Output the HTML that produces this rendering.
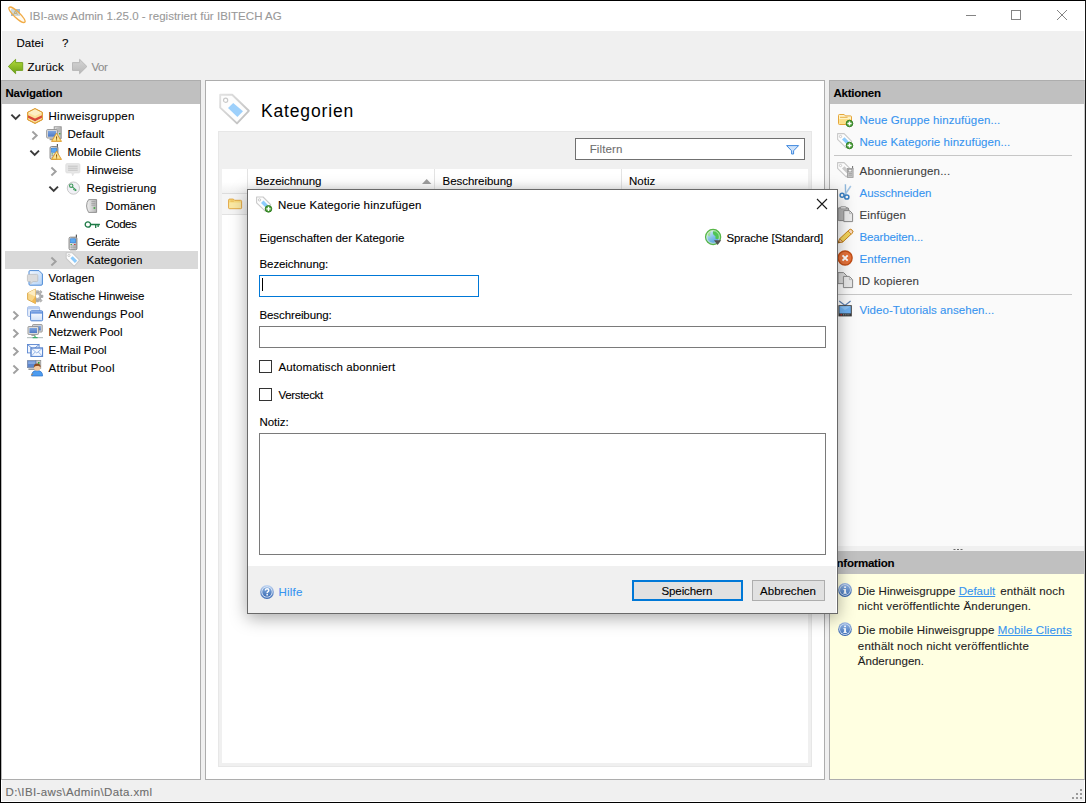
<!DOCTYPE html>
<html lang="de">
<head>
<meta charset="utf-8">
<title>IBI-aws Admin 1.25.0 - registriert für IBITECH AG</title>
<style>
html,body{margin:0;padding:0;}
body{width:1086px;height:803px;position:relative;overflow:hidden;background:#f0f0f0;font-family:"Liberation Sans",sans-serif;font-size:12px;}
.a{position:absolute;box-sizing:border-box;}
.t{position:absolute;white-space:pre;-webkit-text-stroke:.1px currentColor;}
svg{position:absolute;overflow:visible;}
</style>
</head>
<body>
<!-- window frame -->
<div class="a" style="left:0;top:0;width:1086px;height:803px;border:1px solid #000;border-right-color:#161616"></div>
<div class="a" style="left:1px;top:31px;width:1084px;height:771px;border:1px solid #fff;border-top:0"></div>
<!-- title bar -->
<div class="a" style="left:1px;top:1px;width:1084px;height:30px;background:#fff"></div>
<!-- navigation panel -->
<div class="a" style="left:1px;top:80px;width:200px;height:700px;background:#fff;border:1px solid #adadad;border-left-color:#b9b9b9"></div>
<div class="a" style="left:2px;top:81px;width:198px;height:23px;background:#c0c0c0"></div>
<div class="a" style="left:5px;top:251px;width:193px;height:18px;background:#d9d9d9"></div>
<!-- center panel -->
<div class="a" style="left:205px;top:80px;width:620px;height:700px;background:#fff;border:1px solid #adadad"></div>
<div class="a" style="left:218px;top:131px;width:594px;height:636px;background:#f0f0f0;border:1px solid #e7e7e7"></div>
<div class="a" style="left:575px;top:138px;width:230px;height:22px;background:#fff;border:1px solid #707070"></div>
<div class="a" style="left:222px;top:169px;width:586px;height:594px;background:#fff"></div>
<div class="a" style="left:222px;top:169px;width:586px;height:25px;background:linear-gradient(#fff 55%,#f1f1f1);border-bottom:1px solid #dcdcdc"></div>
<div class="a" style="left:247px;top:169px;width:1px;height:24px;background:#e3e3e3"></div>
<div class="a" style="left:434px;top:169px;width:1px;height:24px;background:#e3e3e3"></div>
<div class="a" style="left:621px;top:169px;width:1px;height:24px;background:#e3e3e3"></div>
<div class="a" style="left:222px;top:194px;width:586px;height:21px;background:#f5f5f5;border-bottom:1px solid #e2e2e2"></div>
<!-- right panel -->
<div class="a" style="left:829px;top:80px;width:256px;height:700px;background:#fafafa;border:1px solid #adadad;border-right-color:#c8c8c8"></div>
<div class="a" style="left:830px;top:81px;width:254px;height:23px;background:#c0c0c0"></div>
<div class="a" style="left:834px;top:155px;width:238px;height:1px;background:#c6c6c6"></div>
<div class="a" style="left:834px;top:294px;width:238px;height:1px;background:#c6c6c6"></div>
<div class="a" style="left:830px;top:546px;width:254px;height:5px;background:#f0f0f0"></div>
<div class="a" style="left:830px;top:551px;width:254px;height:23px;background:#c0c0c0"></div>
<div class="a" style="left:830px;top:574px;width:254px;height:205px;background:#ffffe1"></div>
<svg width="1086" height="803" viewBox="0 0 1086 803" style="left:0;top:0">
<defs>
<linearGradient id="gGreen" x1="0" y1="0" x2="0" y2="1"><stop offset="0" stop-color="#b5dc3c"/><stop offset="1" stop-color="#6a9f16"/></linearGradient>
<linearGradient id="gGray" x1="0" y1="0" x2="0" y2="1"><stop offset="0" stop-color="#d4d4d4"/><stop offset="1" stop-color="#b9b9b9"/></linearGradient>
<linearGradient id="gScreen" x1="0" y1="0" x2="0" y2="1"><stop offset="0" stop-color="#7fa6e0"/><stop offset="1" stop-color="#4b78c4"/></linearGradient>
<linearGradient id="gTower" x1="0" y1="0" x2="1" y2="0"><stop offset="0" stop-color="#f2f2f2"/><stop offset="1" stop-color="#b4b4b4"/></linearGradient>
<linearGradient id="gDoc" x1="0" y1="0" x2="1" y2="1"><stop offset="0" stop-color="#f4f9ff"/><stop offset="1" stop-color="#b4d2f6"/></linearGradient>
<linearGradient id="gWarn" x1="0" y1="0" x2="0" y2="1"><stop offset="0" stop-color="#fff0a8"/><stop offset="1" stop-color="#f6c648"/></linearGradient>
<linearGradient id="gWin" x1="0" y1="0" x2="0" y2="1"><stop offset="0" stop-color="#fff"/><stop offset="1" stop-color="#cfe0f7"/></linearGradient>
<linearGradient id="gInfoO" x1="0" y1="0" x2="0" y2="1"><stop offset="0" stop-color="#9db9e4"/><stop offset="1" stop-color="#2f5ea8"/></linearGradient><linearGradient id="gInfoI" x1="0" y1="0" x2="0" y2="1"><stop offset="0" stop-color="#8fb2e2"/><stop offset="1" stop-color="#4474ba"/></linearGradient><radialGradient id="gInfo" cx=".4" cy=".3" r=".8"><stop offset="0" stop-color="#a9c4ec"/><stop offset="1" stop-color="#4a78bc"/></radialGradient>
<g id="chevD"><path d="M0 0 L4.3 4.4 L8.6 0" fill="none" stroke="#3a3a3a" stroke-width="1.9"/></g>
<g id="chevR"><path d="M0 0 L4.3 4 L0 8" fill="none" stroke="#a0a0a0" stroke-width="1.9"/></g>
<g id="warn"><path d="M5.5 .8 L10.5 9 L.5 9 Z" fill="url(#gWarn)" stroke="#dc9a2c" stroke-width=".9" stroke-linejoin="round"/><path d="M5.5 2.4 L9 8.2 L2 8.2 Z" fill="#fff3c0" opacity=".55"/><rect x="5" y="4" width="1.1" height="2.4" fill="#8a5a10"/><rect x="5" y="7" width="1.1" height="1" fill="#8a5a10"/></g>
<g id="tag16"><path d="M.6 .6 L7.1 .6 L14.7 8.3 L9.2 14.8 L.6 6.4 Z" fill="#fdfdfd" stroke="#c9c9c9" stroke-width="1.1" stroke-linejoin="round"/><path d="M7.5 4.2 L12.2 8.9 L9.8 11.3 L5 6.5 Z" fill="#8ccbfc"/><circle cx="3.5" cy="3.5" r="1.15" fill="#fff" stroke="#bcbcbc" stroke-width=".8"/></g>
<g id="phone"><rect x="7.3" y="0" width="1.2" height="4" fill="#5a5a5a"/><rect x=".6" y="2.6" width="7.8" height="12.6" rx="1.3" fill="url(#gTower)" stroke="#7d7d7d" stroke-width="1"/><rect x="2" y="4.2" width="5" height="4" fill="#59a9f4" stroke="#2f7ad0" stroke-width=".6"/><rect x="2" y="9.4" width="1.4" height="1" fill="#3aa23a"/><rect x="5.6" y="9.4" width="1.4" height="1" fill="#d03030"/><path d="M2 11.4h1.3M3.9 11.4h1.3M5.8 11.4h1.3M2 13.2h1.3M3.9 13.2h1.3M5.8 13.2h1.3" stroke="#8a8a8a" stroke-width="1"/></g>
<g id="info"><circle cx="7" cy="7" r="6.9" fill="url(#gInfoO)"/><circle cx="7" cy="7" r="5.7" fill="#dbe7f8"/><circle cx="7" cy="7" r="5" fill="url(#gInfoI)"/><rect x="6.2" y="6" width="1.7" height="4.4" fill="#fff"/><rect x="6.2" y="3.4" width="1.7" height="1.6" fill="#fff"/><rect x="5.4" y="6" width="1.2" height=".9" fill="#fff"/><rect x="5.3" y="9.7" width="3.5" height=".9" fill="#fff"/></g>
<g id="plus"><circle cx="3.6" cy="3.6" r="3.3" fill="#4c9e3a" stroke="#2c7a1e" stroke-width=".9"/><path d="M3.6 1.5v4.2M1.5 3.6h4.2" stroke="#fff" stroke-width="1.4"/></g>
</defs>
<!-- title icon -->
<g>
<rect x="11" y="9" width="9" height="7" fill="#9fbcd6"/>
<path d="M13.6 14.8 L15.4 10.6 L17.4 14.8 M14.3 13.4 H16.6" fill="none" stroke="#7a6414" stroke-width="1"/>
<ellipse cx="17" cy="14.8" rx="10.8" ry="2.9" transform="rotate(43 17 14.8)" fill="rgba(255,246,225,.5)" stroke="#f1ab45" stroke-width="1.3"/>
</g>
<!-- window controls -->
<path d="M966 15.5h10" stroke="#848484" stroke-width="1"/>
<rect x="1011.5" y="10.5" width="9" height="9" fill="none" stroke="#848484" stroke-width="1"/>
<path d="M1057 10 l10 10 M1067 10 l-10 10" stroke="#848484" stroke-width="1"/>
<!-- toolbar arrows -->
<path d="M8.3 66.5 L15.6 59.3 L15.6 62.6 L22.7 62.6 L22.7 70.4 L15.6 70.4 L15.6 73.7 Z" fill="url(#gGreen)" stroke="#6e9f1c" stroke-width=".9" stroke-linejoin="round"/>
<path d="M86.9 66.5 L79.6 59.3 L79.6 62.6 L72.5 62.6 L72.5 70.4 L79.6 70.4 L79.6 73.7 Z" fill="url(#gGray)" stroke="#b4b4b4" stroke-width=".9" stroke-linejoin="round"/>
<!-- tree chevrons -->
<use href="#chevD" x="11.4" y="114.6"/>
<use href="#chevR" x="32.4" y="131.5"/>
<use href="#chevD" x="30.4" y="150.6"/>
<use href="#chevR" x="51.4" y="167.5"/>
<use href="#chevD" x="49.4" y="186.6"/>
<use href="#chevR" x="51.4" y="257.5"/>
<use href="#chevR" x="13.4" y="311.5"/>
<use href="#chevR" x="13.4" y="329.5"/>
<use href="#chevR" x="13.4" y="347.5"/>
<use href="#chevR" x="13.4" y="365.5"/>
<!-- Hinweisgruppen cube -->
<g transform="translate(27,108)">
<path d="M8 .6 L15.4 4.4 L15.4 11.6 L8 15.4 L.6 11.6 L.6 4.4 Z" fill="#fbe29a" stroke="#dfa03a" stroke-width="1" stroke-linejoin="round"/>
<path d="M8 .9 L15 4.5 L8 8 L1 4.5 Z" fill="#fdf0c4"/>
<path d="M1 7.2 L8 10.6 L15 7.2 L15 9.8 L8 13.2 L1 9.8 Z" fill="#d84a3a"/>
<path d="M8 .6 L15.4 4.4 L15.4 11.6 L8 15.4 L.6 11.6 L.6 4.4 Z" fill="none" stroke="#dfa03a" stroke-width="1" stroke-linejoin="round"/>
</g>
<!-- Default: monitor + tower + warning -->
<g transform="translate(46,126)">
<rect x="8.2" y=".8" width="7" height="11.6" fill="url(#gTower)" stroke="#8e8e8e" stroke-width=".9"/>
<path d="M9.6 3h4.2M9.6 5h4.2" stroke="#9a9a9a" stroke-width=".8"/>
<rect x="13" y="7" width="1.4" height="1.4" fill="#3caa3c"/>
<rect x=".7" y="3.6" width="10.6" height="8.4" rx=".8" fill="#e4e4e4" stroke="#8a8a8a" stroke-width=".9"/>
<rect x="2" y="4.9" width="8" height="5.8" fill="url(#gScreen)"/>
<rect x="3.6" y="12.6" width="5" height="1.6" fill="#9c9c9c"/>
<use href="#warn" x="5" y="6.4"/>
</g>
<!-- Mobile Clients: phone + warning -->
<use href="#phone" x="49.5" y="144"/>
<use href="#warn" x="51" y="150.4"/>
<!-- Hinweise bubble -->
<g transform="translate(65.5,163)">
<path d="M1.5 .5 H13 Q14.5 .5 14.5 2 V8.6 Q14.5 10 13 10 H8.6 L7.2 12.8 L6.2 10 H1.5 Q.2 10 .2 8.6 V2 Q.2 .5 1.5 .5Z" fill="#e6e6e6" stroke="#dcdcdc" stroke-width=".6"/>
<path d="M2.6 3.2h9.6M2.6 5.2h9.6M2.6 7.2h9.6" stroke="#bdbdbd" stroke-width=".9"/>
</g>
<!-- Registrierung: circle with key -->
<g transform="translate(66.8,181.5)">
<circle cx="6.6" cy="6.6" r="6.1" fill="#f1f1f6" stroke="#c9c9c9" stroke-width="1"/>
<circle cx="4.4" cy="4.2" r="1.7" fill="none" stroke="#3f9a5c" stroke-width="1.1"/>
<path d="M5.6 5.4 L9.6 9 M7.6 7.2 L6.6 8.4 M8.8 8.3 L7.9 9.4" stroke="#3f9a5c" stroke-width="1.1"/>
</g>
<!-- Domaenen: server -->
<g transform="translate(86,199)">
<path d="M2.6 .6 H10.6 V13.4 H2.6 Q.6 10 .6 7 Q.6 3 2.6 .6Z" fill="url(#gTower)" stroke="#8a8a8a" stroke-width=".9"/>
<path d="M5.4 2.6h4M5.4 4.4h4M5.4 6.2h4" stroke="#9b9b9b" stroke-width=".8"/>
<rect x="7.6" y="8.2" width="1.6" height="1.6" fill="#36a336"/>
</g>
<!-- Codes: key -->
<g transform="translate(84.5,221)" fill="none" stroke="#1d7a46" stroke-width="1.3">
<ellipse cx="3.4" cy="3.5" rx="2.7" ry="2.7"/>
<path d="M6.2 3.5 H15.4 M11.2 3.6 V7 M13.6 3.6 V6"/>
</g>
<!-- Geraete phone -->
<use href="#phone" x="68.5" y="234.6"/>
<!-- Kategorien tag -->
<use href="#tag16" x="65.6" y="252.2" transform="translate(65.6 252.2) scale(.95) translate(-65.6 -252.2)"/>
<!-- Vorlagen -->
<g transform="translate(27,270)">
<path d="M3 .6 H12 L15.4 4 V14 Q15.4 15.2 14.2 15.2 H3 Q2 15.2 2 14 V1.8 Q2 .6 3 .6Z" fill="url(#gDoc)" stroke="#4d8ad6" stroke-width="1"/>
<path d="M1.6 4.4 H9.6 Q10.8 4.4 10.8 5.6 V10.4 Q10.8 11.6 9.6 11.6 H6 L3.6 13.8 V11.6 H1.6 Q.4 11.6 .4 10.4 V5.6 Q.4 4.4 1.6 4.4Z" fill="#dcdcdc" stroke="#b9b9b9" stroke-width=".7"/>
</g>
<!-- Statische Hinweise -->
<g transform="translate(27,288.5)">
<g transform="translate(10.4,7.8)" fill="#b8b8b8" stroke="#8f8f8f" stroke-width=".5">
<path d="M-1.1 -5.6h2.2v2h-2.2z M-1.1 3.6h2.2v2h-2.2z M3.6 -1.1h2v2.2h-2z M1.7 -4.6l1.6-1.2 1.4 1.5-1.3 1.5z M1.7 4.6l1.6 1.2 1.4-1.5-1.3-1.5z"/>
<circle r="3.9"/>
</g>
<circle cx="10.4" cy="7.8" r="1.7" fill="#fff"/>
<path d="M8.4 .6 L8.4 15 L.6 11 L.6 4.6 Z" fill="#f8d68a" stroke="#d9a440" stroke-width=".9" stroke-linejoin="round"/>
<path d="M8.4 .6 L8.4 8 L.6 4.6 Z" fill="#fdecc0"/>
<path d="M8.4 8 L8.4 15 L4.6 13 Z" fill="#f3b850"/>
</g>
<!-- Anwendungs Pool -->
<g transform="translate(27,306)">
<rect x=".6" y=".8" width="12" height="9.6" rx="1" fill="#e6eefb" stroke="#9db8e6" stroke-width="1"/>
<rect x=".6" y=".8" width="12" height="2.4" rx="1" fill="#b9cdf0"/>
<rect x="3.6" y="4.8" width="12" height="10" rx="1" fill="url(#gWin)" stroke="#4a7fd0" stroke-width="1"/>
<rect x="4.1" y="5.3" width="11" height="2.4" fill="#6f9be0"/>
</g>
<!-- Netzwerk Pool -->
<g transform="translate(27,324)">
<rect x="5.6" y=".6" width="9.6" height="7.4" rx=".6" fill="#dedede" stroke="#8c8c8c" stroke-width=".9"/>
<rect x="7" y="1.9" width="6.8" height="4.6" fill="url(#gScreen)"/>
<rect x="1" y="2.6" width="10.4" height="7.8" rx=".6" fill="#e6e6e6" stroke="#8c8c8c" stroke-width=".9"/>
<rect x="2.4" y="4" width="7.6" height="5" fill="url(#gScreen)"/>
<rect x="4.4" y="10.8" width="3.6" height="1.1" fill="#9a9a9a"/>
<rect x="0" y="13" width="16" height="1.2" fill="#b9c4c4"/>
<path d="M8 11.6 V13 M5.6 13.6 H10.6" stroke="#3fae6a" stroke-width="1.3"/>
</g>
<!-- E-Mail Pool -->
<g transform="translate(27,344)" stroke="#5a86cf" stroke-width=".9">
<rect x=".5" y=".5" width="11.6" height="8.4" fill="#f2f7ff"/>
<path d="M.5 .5 L6.3 5.4 L12.1 .5" fill="none"/>
<rect x="4" y="4" width="11.6" height="8.4" fill="#f2f7ff"/>
<path d="M4 4 L9.8 9 L15.6 4 M4 12.4 L8.2 8 M15.6 12.4 L11.4 8" fill="none" stroke="#8fb0e4"/>
<rect x="4" y="4" width="11.6" height="8.4" fill="none"/>
</g>
<!-- Attribut Pool -->
<g transform="translate(27,360)">
<rect x="8.4" y=".4" width="5.4" height="8" fill="#c9c9c9" stroke="#8a8a8a" stroke-width=".7"/>
<rect x="11" y="2" width="1.5" height="1.8" fill="#36a336"/>
<rect x=".4" y=".6" width="8.6" height="7" fill="#5d86cc" stroke="#7a8aa8" stroke-width=".8"/>
<rect x="1.2" y="1.4" width="7" height="2.6" fill="#86a8e0"/>
<rect x="1.4" y="8.4" width="6.6" height="1.6" fill="#9a9a9a"/>
<path d="M4.6 16 Q4.6 10.6 10 10.6 Q15.6 10.6 15.6 16 Z" fill="#4d9cf0" stroke="#2c72c8" stroke-width=".7"/>
<circle cx="10.2" cy="7.6" r="3.2" fill="#f4c9a0"/>
<path d="M6.8 7.4 Q6.6 3.4 10.2 3.4 Q13.8 3.4 13.6 7.4 Q12 5.4 10.2 6 Q8.2 5.6 6.8 7.4Z" fill="#8c4a1e"/>
<path d="M4.4 15.2 l1.2 -1.6" stroke="#e08020" stroke-width="1"/>
</g>
<!-- big tag icon -->
<g transform="translate(219,93.6)">
<defs><linearGradient id="gTagS" x1="0" y1="0" x2="1" y2="1"><stop offset="0" stop-color="#e2e2e2"/><stop offset="1" stop-color="#bdbdbd"/></linearGradient></defs>
<path d="M1.2 1.2 L13.2 1.2 L29.8 17.2 L18 29.8 L1.2 14 Z" fill="#fdfdfd" stroke="url(#gTagS)" stroke-width="1.9" stroke-linejoin="round"/>
<path d="M14.2 9.4 L24 17.6 L18.4 23.4 L9 14.4 Z" fill="#9dd0fb"/>
<circle cx="6.6" cy="6.6" r="2.1" fill="#fff" stroke="#c9c9c9" stroke-width="1.2"/>
</g>
<!-- filter funnel -->
<path d="M786.6 145.6 H798.6 L793.6 150.8 V154 H791.6 V150.8 Z" fill="#cfe3fa" stroke="#3f88de" stroke-width="1" stroke-linejoin="round"/>
<!-- sort arrow -->
<path d="M422 184 L426.7 179 L431.4 184 Z" fill="#9e9e9e"/>
<!-- folder in row -->
<g transform="translate(228,198.5)">
<path d="M.6 1.6 Q.6 .6 1.6 .6 H5.4 L6.6 1.8 H12.6 Q13.6 1.8 13.6 2.8 V9.4 Q13.6 10.2 12.6 10.2 H1.6 Q.6 10.2 .6 9.4Z" fill="#f8dc7c" stroke="#e0a03a" stroke-width=".9"/>
<path d="M1.2 4 H13 V9.6 H1.2Z" fill="#fbe9a4"/>
<path d="M2.4 2.6 h3.4" stroke="#e6b14e" stroke-width=".9"/>
</g>
<!-- actions icons -->
<g transform="translate(838,114)">
<path d="M.5 1.4 Q.5 .5 1.4 .5 H6.2 L7.4 1.9 H12.6 Q13.5 1.9 13.5 2.8 V9.6 Q13.5 10.5 12.6 10.5 H1.4 Q.5 10.5 .5 9.6Z" fill="#fdf3c8" stroke="#e6a63a" stroke-width="1"/>
<path d="M1.2 5 H12.8 V9.9 H1.2Z" fill="#fbe08a"/>
<path d="M2 3.3 h7.6" stroke="#e8b04a" stroke-width="1"/>
<use href="#plus" x="7.9" y="5.9"/>
</g>
<g transform="translate(837,133)"><use href="#tag16" x="0" y="0"/><use href="#plus" x="8.9" y="8.9"/></g>
<g transform="translate(837,162)">
<path d="M.6 .6 L7.1 .6 L14.7 8.3 L9.2 14.8 L.6 6.4 Z" fill="#fbfbfb" stroke="#c6c6c6" stroke-width="1.1" stroke-linejoin="round"/>
<path d="M7.5 4.2 L12.2 8.9 L9.8 11.3 L5 6.5 Z" fill="#c9c9c9"/>
<circle cx="3.5" cy="3.5" r="1.15" fill="#fff" stroke="#bcbcbc" stroke-width=".8"/>
<rect x="15" y="4" width="1.1" height="4" fill="#7a7a7a"/>
<rect x="10.5" y="6.4" width="5.6" height="9" fill="#c4c4c4" stroke="#9a9a9a" stroke-width=".8"/>
<rect x="11.6" y="7.6" width="3.2" height="2.2" fill="#f2f2f2" stroke="#8f8f8f" stroke-width=".5"/>
<path d="M11.6 11.4h3.4M11.6 13.2h3.4" stroke="#a2a2a2" stroke-width=".9"/>
</g>
<g fill="none">
<path d="M845.4 184.2 L845.6 196" stroke="#8fb8dc" stroke-width="1.4"/>
<path d="M850.8 186 L845 194.6" stroke="#a4c6e4" stroke-width="1.6"/>
<circle cx="842.1" cy="195.2" r="2" stroke="#3a80c4" stroke-width="1.5"/>
<circle cx="846.8" cy="197" r="2.1" stroke="#3a80c4" stroke-width="1.5"/>
</g>
<g transform="translate(837,206)">
<rect x="1" y="1.8" width="10.6" height="12.8" rx="1.2" fill="#b4b4b4" stroke="#848484" stroke-width="1"/>
<rect x="3.6" y=".5" width="5.4" height="2.4" rx=".6" fill="#dcdcdc" stroke="#8a8a8a" stroke-width=".6"/>
<path d="M6.8 4.6 H12.6 L15.6 7.6 V15.6 H6.8Z" fill="#ececec" stroke="#8a8a8a" stroke-width="1" stroke-linejoin="round"/>
<path d="M12.6 4.6 V7.6 H15.6" fill="none" stroke="#a8a8a8" stroke-width=".7"/>
</g>
<g>
<path d="M838.3 242.8 L839.6 238.8 L849 230 Q850.6 228.6 852.2 230.2 Q853.6 231.8 852.2 233.2 L843 241.8 Z" fill="#f2d45c" stroke="#c8841c" stroke-width="1" stroke-linejoin="round"/>
<path d="M848 231 L851.2 234.2 L852.2 233.2 Q853.6 231.8 852.2 230.2 Q850.6 228.6 849 230Z" fill="#f6d8c0" stroke="#c8841c" stroke-width=".8"/>
<path d="M838.3 242.8 L839.6 238.8 L843 241.8Z" fill="#f4c8a0" stroke="#b87418" stroke-width=".8"/>
<path d="M838.3 242.8 L838.8 241.2 L840 242.3Z" fill="#503010"/>
</g>
<g>
<circle cx="845.1" cy="258" r="7" fill="#e6723a" stroke="#c24e16" stroke-width="1.4"/>
<path d="M842.5 255.4 L847.7 260.6 M847.7 255.4 L842.5 260.6" stroke="#fff" stroke-width="2"/>
</g>
<g transform="translate(837,272)">
<path d="M1 .6 H6.6 L9.8 3.8 V11.6 H1Z" fill="#dadada" stroke="#8a8a8a" stroke-width="1" stroke-linejoin="round"/>
<path d="M6.4 4.4 H12.4 L15.6 7.6 V15.6 H6.4Z" fill="#e8e8e8" stroke="#8a8a8a" stroke-width="1" stroke-linejoin="round"/>
<path d="M12.4 4.4 V7.6 H15.6" fill="none" stroke="#a8a8a8" stroke-width=".7"/>
</g>
<g>
<path d="M839.2 301 L845 305.4 L850.6 301" fill="none" stroke="#5a7eae" stroke-width="1.2"/>
<rect x="838.4" y="305.2" width="13.4" height="11.2" fill="#3a3a3a"/>
<rect x="839.4" y="306.2" width="11.4" height="7.2" fill="#6eb0f0"/>
<path d="M839.4 306.2 L845 310 L850.8 306.2Z" fill="#8ac2f6"/>
<rect x="840.6" y="314.2" width="1.2" height="1.2" fill="#f03030"/>
<path d="M843 314.8h7" stroke="#9a9a9a" stroke-width="1" stroke-dasharray="1 .8"/>
</g>
<!-- splitter dots -->
<path d="M953.5 549.5h2M957 549.5h2M960.5 549.5h2" stroke="#6a6a6a" stroke-width="1"/>
<!-- info icons -->
<use href="#info" x="838" y="583"/>
<use href="#info" x="838" y="622.2"/>
<!-- resize grip -->
<g fill="#9b9b9b"><rect x="1080" y="789" width="2" height="2"/><rect x="1076" y="793" width="2" height="2"/><rect x="1080" y="793" width="2" height="2"/><rect x="1072" y="797" width="2" height="2"/><rect x="1076" y="797" width="2" height="2"/><rect x="1080" y="797" width="2" height="2"/></g>
</svg>

<span class="t" style="left:29.50px;top:8.02px;font-size:11.5px;line-height:16px;letter-spacing:0.021px;color:#999;">IBI-aws Admin 1.25.0 - registriert für IBITECH AG</span>
<span class="t" style="left:16.50px;top:35.02px;font-size:11.5px;line-height:16px;letter-spacing:0.052px;color:#000;">Datei</span>
<span class="t" style="left:62.00px;top:35.02px;font-size:11.5px;line-height:16px;letter-spacing:-1.000px;color:#000;">?</span>
<span class="t" style="left:27.50px;top:59.02px;font-size:11.5px;line-height:16px;letter-spacing:0.221px;color:#000;">Zurück</span>
<span class="t" style="left:91.50px;top:59.02px;font-size:11.5px;line-height:16px;letter-spacing:-0.466px;color:#8d8d8d;">Vor</span>
<span class="t" style="left:5.50px;top:85.02px;font-size:11.5px;line-height:16px;letter-spacing:-0.196px;color:#000;font-weight:700;">Navigation</span>
<span class="t" style="left:48.50px;top:108.02px;font-size:11.5px;line-height:16px;letter-spacing:0.264px;color:#000;">Hinweisgruppen</span>
<span class="t" style="left:67.50px;top:126.02px;font-size:11.5px;line-height:16px;letter-spacing:0.043px;color:#000;">Default</span>
<span class="t" style="left:67.50px;top:144.02px;font-size:11.5px;line-height:16px;letter-spacing:0.079px;color:#000;">Mobile Clients</span>
<span class="t" style="left:86.50px;top:162.02px;font-size:11.5px;line-height:16px;letter-spacing:0.034px;color:#000;">Hinweise</span>
<span class="t" style="left:86.50px;top:180.02px;font-size:11.5px;line-height:16px;letter-spacing:0.125px;color:#000;">Registrierung</span>
<span class="t" style="left:105.50px;top:198.02px;font-size:11.5px;line-height:16px;letter-spacing:0.005px;color:#000;">Domänen</span>
<span class="t" style="left:105.50px;top:216.02px;font-size:11.5px;line-height:16px;letter-spacing:-0.498px;color:#000;">Codes</span>
<span class="t" style="left:86.50px;top:234.02px;font-size:11.5px;line-height:16px;letter-spacing:-0.352px;color:#000;">Geräte</span>
<span class="t" style="left:86.50px;top:252.02px;font-size:11.5px;line-height:16px;letter-spacing:0.030px;color:#000;">Kategorien</span>
<span class="t" style="left:48.50px;top:270.02px;font-size:11.5px;line-height:16px;letter-spacing:0.071px;color:#000;">Vorlagen</span>
<span class="t" style="left:48.50px;top:288.02px;font-size:11.5px;line-height:16px;letter-spacing:-0.074px;color:#000;">Statische Hinweise</span>
<span class="t" style="left:48.50px;top:306.02px;font-size:11.5px;line-height:16px;letter-spacing:0.168px;color:#000;">Anwendungs Pool</span>
<span class="t" style="left:48.50px;top:324.02px;font-size:11.5px;line-height:16px;letter-spacing:-0.007px;color:#000;">Netzwerk Pool</span>
<span class="t" style="left:48.50px;top:342.02px;font-size:11.5px;line-height:16px;letter-spacing:-0.074px;color:#000;">E-Mail Pool</span>
<span class="t" style="left:48.50px;top:360.02px;font-size:11.5px;line-height:16px;letter-spacing:0.284px;color:#000;">Attribut Pool</span>
<span class="t" style="left:261.00px;top:99.94px;font-size:17.5px;line-height:22px;letter-spacing:0.843px;color:#000;-webkit-text-stroke:0;">Kategorien</span>
<span class="t" style="left:589.70px;top:141.22px;font-size:11.5px;line-height:16px;letter-spacing:0.124px;color:#707070;">Filtern</span>
<span class="t" style="left:255.50px;top:173.22px;font-size:11.5px;line-height:16px;letter-spacing:-0.060px;color:#000;">Bezeichnung</span>
<span class="t" style="left:442.50px;top:173.22px;font-size:11.5px;line-height:16px;letter-spacing:-0.039px;color:#000;">Beschreibung</span>
<span class="t" style="left:629.00px;top:173.22px;font-size:11.5px;line-height:16px;letter-spacing:0.012px;color:#000;">Notiz</span>
<span class="t" style="left:833.50px;top:85.02px;font-size:11.5px;line-height:16px;letter-spacing:-0.239px;color:#000;font-weight:700;">Aktionen</span>
<span class="t" style="left:859.50px;top:112.02px;font-size:11.5px;line-height:16px;letter-spacing:0.108px;color:#3794f0;">Neue Gruppe hinzufügen...</span>
<span class="t" style="left:859.50px;top:134.02px;font-size:11.5px;line-height:16px;letter-spacing:0.064px;color:#3794f0;">Neue Kategorie hinzufügen...</span>
<span class="t" style="left:859.50px;top:163.02px;font-size:11.5px;line-height:16px;letter-spacing:0.206px;color:#404040;">Abonnierungen...</span>
<span class="t" style="left:859.50px;top:185.02px;font-size:11.5px;line-height:16px;letter-spacing:-0.032px;color:#3794f0;">Ausschneiden</span>
<span class="t" style="left:859.50px;top:207.02px;font-size:11.5px;line-height:16px;letter-spacing:0.142px;color:#404040;">Einfügen</span>
<span class="t" style="left:859.50px;top:229.02px;font-size:11.5px;line-height:16px;letter-spacing:-0.126px;color:#3794f0;">Bearbeiten...</span>
<span class="t" style="left:859.50px;top:251.02px;font-size:11.5px;line-height:16px;letter-spacing:0.128px;color:#3794f0;">Entfernen</span>
<span class="t" style="left:858.50px;top:273.02px;font-size:11.5px;line-height:16px;letter-spacing:0.159px;color:#404040;">ID kopieren</span>
<span class="t" style="left:859.50px;top:301.52px;font-size:11.5px;line-height:16px;letter-spacing:0.043px;color:#3794f0;">Video-Tutorials ansehen...</span>
<span class="t" style="left:833.50px;top:555.02px;font-size:11.5px;line-height:16px;letter-spacing:-0.222px;color:#000;font-weight:700;">Information</span>
<span class="t" style="left:5.50px;top:783.52px;font-size:11.5px;line-height:16px;letter-spacing:0.382px;color:#6d6d6d;">D:\IBI-aws\Admin\Data.xml</span>
<span class="t" style="left:857.80px;top:583.22px;font-size:11.5px;line-height:16px;letter-spacing:0.067px;color:#1e1e1e;">Die Hinweisgruppe</span>
<span class="t" style="left:958.70px;top:583.22px;font-size:11.5px;line-height:16px;letter-spacing:0.010px;color:#3794f0;text-decoration:underline;text-underline-offset:1px;">Default</span>
<span class="t" style="left:1000.20px;top:583.22px;font-size:11.5px;line-height:16px;letter-spacing:0.167px;color:#1e1e1e;">enthält noch</span>
<span class="t" style="left:857.80px;top:598.22px;font-size:11.5px;line-height:16px;letter-spacing:0.165px;color:#1e1e1e;">nicht veröffentlichte Änderungen.</span>
<span class="t" style="left:857.80px;top:622.22px;font-size:11.5px;line-height:16px;letter-spacing:0.131px;color:#1e1e1e;">Die mobile Hinweisgruppe</span>
<span class="t" style="left:997.80px;top:622.22px;font-size:11.5px;line-height:16px;letter-spacing:0.125px;color:#3794f0;text-decoration:underline;text-underline-offset:1px;">Mobile Clients</span>
<span class="t" style="left:857.80px;top:637.72px;font-size:11.5px;line-height:16px;letter-spacing:0.193px;color:#1e1e1e;">enthält noch nicht veröffentlichte</span>
<span class="t" style="left:857.80px;top:653.22px;font-size:11.5px;line-height:16px;letter-spacing:0.033px;color:#1e1e1e;">Änderungen.</span>
<!-- dialog -->
<div class="a" style="left:247px;top:189px;width:591px;height:425px;background:#fff;border:1px solid #696969;box-shadow:0 4px 16px rgba(0,0,0,.34)"></div>
<div class="a" style="left:248px;top:566px;width:588px;height:47px;background:#f0f0f0"></div>
<div class="a" style="left:259px;top:275px;width:220px;height:22px;background:#fff;border:1px solid #0078d7"></div>
<div class="a" style="left:262px;top:278px;width:1px;height:13px;background:#000"></div>
<div class="a" style="left:259px;top:326px;width:567px;height:22px;background:#fff;border:1px solid #7a7a7a"></div>
<div class="a" style="left:259px;top:360px;width:13px;height:13px;background:#fff;border:1px solid #333"></div>
<div class="a" style="left:259px;top:388px;width:13px;height:13px;background:#fff;border:1px solid #333"></div>
<div class="a" style="left:259px;top:433px;width:567px;height:122px;background:#fff;border:1px solid #7a7a7a"></div>
<div class="a" style="left:632px;top:580px;width:111px;height:21px;background:#e1e1e1;border:2px solid #0078d7"></div>
<div class="a" style="left:752px;top:580px;width:73px;height:21px;background:#e1e1e1;border:1px solid #adadad"></div>
<svg width="1086" height="803" viewBox="0 0 1086 803" style="left:0;top:0">
<defs>
<radialGradient id="gGlobe" cx=".4" cy=".35" r=".75"><stop offset="0" stop-color="#c6f0a0"/><stop offset="1" stop-color="#4aa83a"/></radialGradient>
<radialGradient id="gHelp" cx=".4" cy=".3" r=".8"><stop offset="0" stop-color="#b4c8e8"/><stop offset="1" stop-color="#5a82c0"/></radialGradient>
</defs>
<!-- dialog title icon -->
<g transform="translate(256,196.4)"><use href="#tag16" x="0" y="0"/><use href="#plus" x="8.9" y="8.9"/></g>
<!-- dialog close -->
<path d="M817 199 l10 10 M827 199 l-10 10" stroke="#1a1a1a" stroke-width="1.1"/>
<!-- globe -->
<g>
<defs><linearGradient id="gSea" x1=".2" y1="0" x2=".7" y2="1"><stop offset="0" stop-color="#dff2f4"/><stop offset=".55" stop-color="#7fbde8"/><stop offset="1" stop-color="#4f9ddc"/></linearGradient></defs>
<circle cx="713.1" cy="237" r="7.5" fill="url(#gSea)" stroke="#58b648" stroke-width="1.4"/>
<path d="M713.6 230.6 Q717.6 230.4 719.6 233.4 Q720.8 236.2 719.4 238.6 Q717 239.8 715.2 238.2 Q716.4 236 714 235.2 Q712 233.4 713.6 230.6Z" fill="#4fc556"/>
<path d="M707.2 233.6 Q708.6 231.2 711.2 230.6 Q709.6 233.4 710.2 236.4 Q708 236.8 707.2 233.6Z" fill="#9fdf98"/>
<circle cx="713.1" cy="237" r="6.3" fill="none" stroke="#e4f5d4" stroke-width=".8" opacity=".9"/>
<path d="M714 240.3 H721.2 L717.6 245 Z" fill="#525252"/>
</g>
<!-- help icon -->
<g transform="translate(260,585)">
<defs><linearGradient id="gHelpO" x1="0" y1="0" x2="0" y2="1"><stop offset="0" stop-color="#c2d6f2"/><stop offset="1" stop-color="#3b6cb6"/></linearGradient>
<linearGradient id="gHelpI" x1="0" y1="0" x2="0" y2="1"><stop offset="0" stop-color="#86aedf"/><stop offset="1" stop-color="#3d6db4"/></linearGradient></defs>
<circle cx="7" cy="7" r="6.9" fill="url(#gHelpO)"/>
<circle cx="7" cy="7" r="5.5" fill="#eef4fd"/>
<circle cx="7" cy="7" r="4.8" fill="url(#gHelpI)"/>
<path d="M5.3 5.6 Q5.3 3.8 7 3.8 Q8.8 3.8 8.8 5.3 Q8.8 6.3 7.8 6.9 Q7.1 7.3 7.1 8.2" fill="none" stroke="#fff" stroke-width="1.4"/>
<rect x="6.4" y="9" width="1.5" height="1.5" fill="#fff"/>
</g>
</svg>

<span class="t" style="left:278.00px;top:197.02px;font-size:11.5px;line-height:16px;letter-spacing:0.167px;color:#000;">Neue Kategorie hinzufügen</span>
<span class="t" style="left:259.50px;top:230.02px;font-size:11.5px;line-height:16px;letter-spacing:-0.009px;color:#000;">Eigenschaften der Kategorie</span>
<span class="t" style="left:726.50px;top:230.02px;font-size:11.5px;line-height:16px;letter-spacing:-0.141px;color:#000;">Sprache [Standard]</span>
<span class="t" style="left:259.50px;top:256.02px;font-size:11.5px;line-height:16px;letter-spacing:-0.091px;color:#000;">Bezeichnung:</span>
<span class="t" style="left:259.50px;top:307.02px;font-size:11.5px;line-height:16px;letter-spacing:-0.110px;color:#000;">Beschreibung:</span>
<span class="t" style="left:278.50px;top:359.22px;font-size:11.5px;line-height:16px;letter-spacing:0.113px;color:#000;">Automatisch abonniert</span>
<span class="t" style="left:278.50px;top:387.22px;font-size:11.5px;line-height:16px;letter-spacing:-0.325px;color:#000;">Versteckt</span>
<span class="t" style="left:259.50px;top:414.22px;font-size:11.5px;line-height:16px;letter-spacing:-0.040px;color:#000;">Notiz:</span>
<span class="t" style="left:278.50px;top:584.02px;font-size:11.5px;line-height:16px;letter-spacing:0.223px;color:#3794f0;">Hilfe</span>
<span class="t" style="left:661.50px;top:583.02px;font-size:11.5px;line-height:16px;letter-spacing:-0.111px;color:#000;">Speichern</span>
<span class="t" style="left:760.00px;top:583.02px;font-size:11.5px;line-height:16px;letter-spacing:0.034px;color:#000;">Abbrechen</span>
</body>
</html>
